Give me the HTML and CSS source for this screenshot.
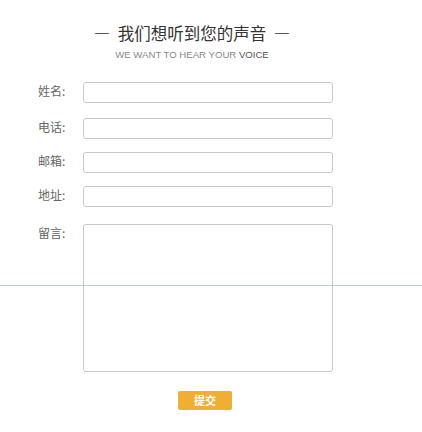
FILE: index.html
```html
<!DOCTYPE html>
<html lang="zh-CN">
<head>
<meta charset="utf-8">
<title>留言</title>
<link rel="stylesheet" href="styles.css">
</head>
<body>
<div class="page">
  <div class="head">
    <h2 class="title">— &nbsp;我们想听到您的声音&nbsp; —</h2>
    <p class="sub">WE WANT TO HEAR YOUR <b>VOICE</b></p>
  </div>
  <form class="msg" action="#">
    <div class="row r1"><label class="lab">姓名:</label><input type="text" class="box"></div>
    <div class="row r2"><label class="lab">电话:</label><input type="text" class="box"></div>
    <div class="row r3"><label class="lab">邮箱:</label><input type="text" class="box"></div>
    <div class="row r4"><label class="lab">地址:</label><input type="text" class="box"></div>
    <div class="row r5"><label class="lab">留言:</label><textarea class="box area"></textarea></div>
    <div class="send"><button type="button" class="btn">提交</button></div>
  </form>
  <div class="guide"></div>
</div>
</body>
</html>
```
FILE: styles.css
```css
body{
margin:0;
background:#fff;
font-family:"Noto Sans CJK SC","Liberation Sans",sans-serif;
}
.page{
width:422px;
height:432px;
position:relative;
}
.head{
padding-top:20px;
text-align:center;
width:384px;
}
.title{
margin:0;
font-size:16.5px;
font-weight:normal;
color:#333;
line-height:26px;
}
.sub{
margin:3px 0 0;
font-family:"Liberation Sans",Arial,sans-serif;
font-size:9.6px;
color:#888;
line-height:12px;
}
.sub b{
font-weight:normal;
color:#555;
}
.msg{
margin-top:21px;
}
.row{
display:flex;
align-items:flex-start;
}
.r1{margin-bottom:15px;}
.r2{margin-bottom:13px;}
.r3{margin-bottom:13px;}
.r4{margin-bottom:17px;}
.lab{
width:45px;
padding-left:38px;
font-size:12px;
color:#666;
line-height:17px;
}
.box{
box-sizing:border-box;
width:250px;
height:21px;
border:1px solid #c8c8c8;
border-radius:3px;
margin:0;
padding:0 4px;
background:transparent;
}
.area{
height:148px;
resize:none;
}
.r5 .lab{line-height:18px;}
.send{
margin-top:14px;
text-align:center;
padding-left:26px;
width:358px;
}
.btn{
width:54px;
height:19px;
border:0;
border-radius:2px;
background:#f0ae33;
color:#fff;
font-family:"Noto Sans CJK SC",sans-serif;
font-size:11px;
font-weight:bold;
line-height:19px;
padding:0;
}
/* 参考线 */
.guide{
position:absolute;
left:0;
top:285px;
width:422px;
height:1px;
background:#72f0f0;
}
```
